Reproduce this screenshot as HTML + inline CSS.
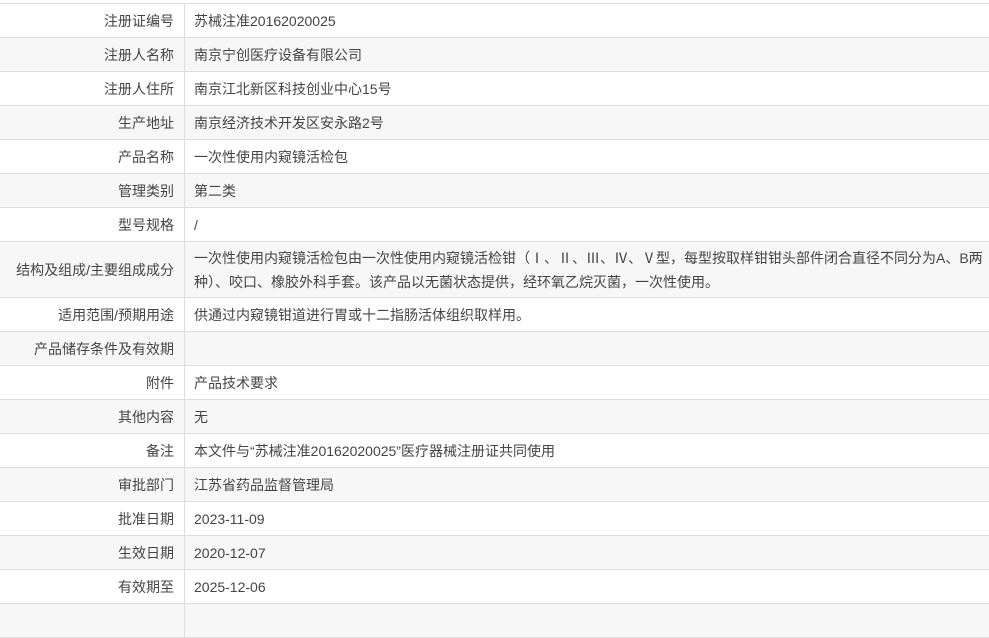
<!DOCTYPE html>
<html><head><meta charset="utf-8"><style>
body{margin:0;background:#fff;font-family:"Liberation Sans","Microsoft YaHei","Noto Sans CJK SC",sans-serif;font-size:14px;color:#444;}
table{position:absolute;left:-1px;top:3px;border-collapse:collapse;width:1010px;}
td{border-top:1px solid #ddd;border-bottom:1px solid #ddd;height:33px;padding:0;white-space:nowrap;overflow:hidden;}
td.l{width:175px;text-align:right;padding-right:10px;border-right:1px solid #ddd;}
td.r{padding-left:9px;}
tr:nth-child(even) td{background:#f7f7f7;}
tr.two td{height:55px;line-height:24px;}
</style></head><body>
<table>
<tr><td class="l">注册证编号</td><td class="r">苏械注准20162020025</td></tr>
<tr><td class="l">注册人名称</td><td class="r">南京宁创医疗设备有限公司</td></tr>
<tr><td class="l">注册人住所</td><td class="r">南京江北新区科技创业中心15号</td></tr>
<tr><td class="l">生产地址</td><td class="r">南京经济技术开发区安永路2号</td></tr>
<tr><td class="l">产品名称</td><td class="r">一次性使用内窥镜活检包</td></tr>
<tr><td class="l">管理类别</td><td class="r">第二类</td></tr>
<tr><td class="l">型号规格</td><td class="r">/</td></tr>
<tr class="two"><td class="l">结构及组成/主要组成成分</td><td class="r">一次性使用内窥镜活检包由一次性使用内窥镜活检钳（Ⅰ、Ⅱ、Ⅲ、Ⅳ、Ⅴ型，每型按取样钳钳头部件闭合直径不同分为A、B两<br>种）、咬口、橡胶外科手套。该产品以无菌状态提供，经环氧乙烷灭菌，一次性使用。</td></tr>
<tr><td class="l">适用范围/预期用途</td><td class="r">供通过内窥镜钳道进行胃或十二指肠活体组织取样用。</td></tr>
<tr><td class="l">产品储存条件及有效期</td><td class="r"></td></tr>
<tr><td class="l">附件</td><td class="r">产品技术要求</td></tr>
<tr><td class="l">其他内容</td><td class="r">无</td></tr>
<tr><td class="l">备注</td><td class="r">本文件与“苏械注准20162020025”医疗器械注册证共同使用</td></tr>
<tr><td class="l">审批部门</td><td class="r">江苏省药品监督管理局</td></tr>
<tr><td class="l">批准日期</td><td class="r">2023-11-09</td></tr>
<tr><td class="l">生效日期</td><td class="r">2020-12-07</td></tr>
<tr><td class="l">有效期至</td><td class="r">2025-12-06</td></tr>
<tr><td class="l">&nbsp;</td><td class="r"></td></tr>
</table>
</body></html>
